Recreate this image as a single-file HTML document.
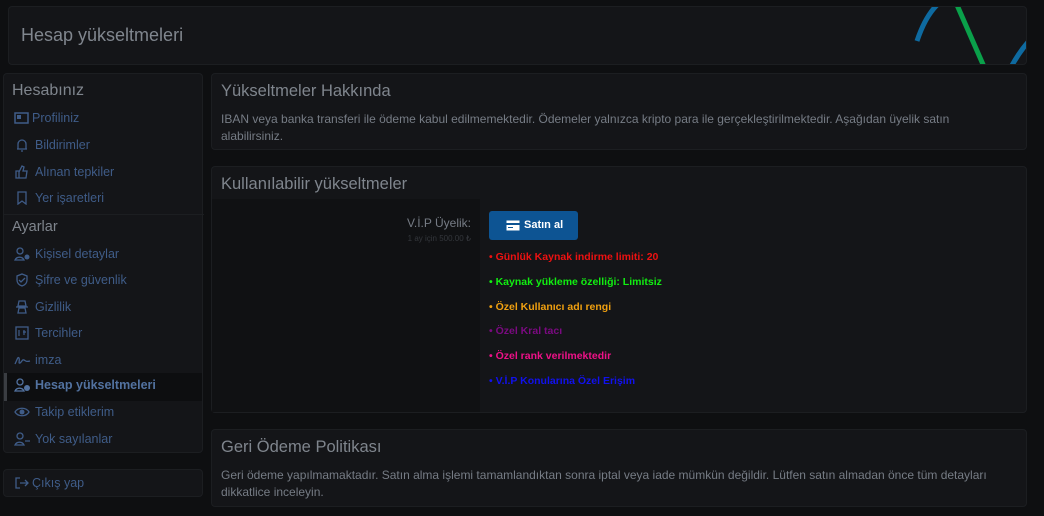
<!DOCTYPE html><html><head><meta charset="utf-8"><style>
*{box-sizing:border-box;margin:0;padding:0}
body{width:1044px;height:516px;background:#0e0f11;font-family:"Liberation Sans",sans-serif;overflow:hidden;position:relative;color:#8a8f98}
.b{position:absolute;background:#141518;border:1px solid #1c1e21;border-radius:4px}
.h{font-size:16.5px;color:#7f858d}
.nav{position:absolute;left:12px;font-size:12.5px;color:#3f5c88}
.nav svg{position:absolute;left:2px;top:0}
.nav span{position:absolute;left:23px;white-space:nowrap}
.li{position:absolute;left:489px;font-size:10.5px;font-weight:bold;white-space:nowrap}
</style></head><body>
<div class="b" style="left:8px;top:6px;width:1019px;height:59px;overflow:hidden">
<div style="position:absolute;left:12px;top:18px;font-size:18px;color:#80868e">Hesap yükseltmeleri</div>
<svg style="position:absolute;left:900px;top:0" width="120" height="60"><path d="M8 34 Q16 10 28 -2" stroke="#0e6aa0" stroke-width="5" fill="none"/><path d="M48 -2 Q62 30 76 62" stroke="#0aa04a" stroke-width="5" fill="none"/><path d="M101 62 Q110 45 120 34" stroke="#0e6aa0" stroke-width="5" fill="none"/></svg>
</div>
<div class="b" style="left:3px;top:73px;width:200px;height:380px">
<div style="position:absolute;left:8px;top:8px;font-size:16px;color:#7f858d">Hesabınız</div>
<div style="position:absolute;left:8px;top:145px;font-size:14.5px;color:#7f858d">Ayarlar</div>
<div style="position:absolute;left:0;top:140px;width:200px;border-top:1px solid #1c1e21"></div>
<div style="position:absolute;left:0;top:299px;width:198px;height:28px;background:#0d0e10;border-left:3px solid #3a3d42"></div>
</div>
<div class="nav" style="top:111px"><svg width="16" height="14"><rect x="1" y="2" width="13" height="10" fill="none" stroke="#3f5c88" stroke-width="1.5"/><rect x="3" y="4" width="4" height="4" fill="#3f5c88"/></svg><span style="left:20px">Profiliniz</span></div>
<div class="nav" style="top:138px"><svg width="16" height="14"><path d="M4 11V6a4 4 0 0 1 8 0v5H3h10M7 13h2" stroke="#3f5c88" fill="none" stroke-width="1.3"/></svg><span>Bildirimler</span></div>
<div class="nav" style="top:165px"><svg width="16" height="14"><path d="M2 6h3v7H2zM5 7l3-6 2 1-1 4h4l-1 7H5" stroke="#3f5c88" fill="none" stroke-width="1.3"/></svg><span>Alınan tepkiler</span></div>
<div class="nav" style="top:191px"><svg width="16" height="14"><path d="M4 1h8v12l-4-3-4 3z" stroke="#3f5c88" fill="none" stroke-width="1.3"/></svg><span>Yer işaretleri</span></div>
<div class="nav" style="top:247px"><svg width="18" height="14"><circle cx="6" cy="4" r="3" stroke="#3f5c88" fill="none" stroke-width="1.3"/><path d="M1 13a5 5 0 0 1 9 0z" stroke="#3f5c88" fill="none" stroke-width="1.3"/><circle cx="13" cy="10" r="2.5" fill="#3f5c88"/></svg><span>Kişisel detaylar</span></div>
<div class="nav" style="top:273px"><svg width="16" height="14"><path d="M8 1l5 2v4c0 3-2 5-5 6-3-1-5-3-5-6V3zM5 7l2 2 4-4" stroke="#3f5c88" fill="none" stroke-width="1.3"/></svg><span>Şifre ve güvenlik</span></div>
<div class="nav" style="top:300px"><svg width="16" height="14"><path d="M5 1h6l1 5H4zM2 7h12M4 13l1-5h6l1 5z" stroke="#3f5c88" fill="none" stroke-width="1.3"/></svg><span>Gizlilik</span></div>
<div class="nav" style="top:326px"><svg width="16" height="14"><rect x="2" y="1" width="12" height="12" stroke="#3f5c88" fill="none" stroke-width="1.3"/><path d="M5 4v6M9 6h3M10 4v5" stroke="#3f5c88" stroke-width="1.2"/></svg><span>Tercihler</span></div>
<div class="nav" style="top:353px"><svg width="18" height="14"><path d="M1 11c2-4 3-8 4-6s-1 6 1 5 2-4 4-3 2 2 6 1" stroke="#3f5c88" fill="none" stroke-width="1.3"/></svg><span>imza</span></div>
<div class="nav" style="top:378px;color:#5272a0;font-weight:bold"><svg width="18" height="14"><circle cx="6" cy="4" r="3" stroke="#5272a0" fill="none" stroke-width="1.3"/><path d="M1 13a5 5 0 0 1 9 0z" stroke="#5272a0" fill="none" stroke-width="1.3"/><circle cx="13" cy="10" r="3" fill="#5272a0"/></svg><span>Hesap yükseltmeleri</span></div>
<div class="nav" style="top:405px"><svg width="18" height="14"><path d="M1 7c3-5 11-5 14 0-3 5-11 5-14 0z" stroke="#3f5c88" fill="none" stroke-width="1.3"/><circle cx="8" cy="7" r="2.5" fill="#3f5c88"/></svg><span>Takip etiklerim</span></div>
<div class="nav" style="top:432px"><svg width="18" height="14"><circle cx="6" cy="4" r="3" stroke="#3f5c88" fill="none" stroke-width="1.3"/><path d="M1 13a5 5 0 0 1 9 0zM11 9h5" stroke="#3f5c88" fill="none" stroke-width="1.3"/></svg><span>Yok sayılanlar</span></div>
<div class="b" style="left:3px;top:469px;width:200px;height:28px"></div>
<div class="nav" style="top:476px"><svg width="16" height="14"><path d="M6 2H2v10h4M6 7h8M11 4l3 3-3 3" stroke="#3f5c88" fill="none" stroke-width="1.3"/></svg><span style="left:20px">Çıkış yap</span></div>

<div class="b" style="left:211px;top:73px;width:816px;height:77px">
<div class="h" style="position:absolute;left:9px;top:8px">Yükseltmeler Hakkında</div>
<div style="position:absolute;left:9px;top:37px;width:790px;font-size:12px;line-height:17px;color:#767c85">IBAN veya banka transferi ile ödeme kabul edilmemektedir. Ödemeler yalnızca kripto para ile gerçekleştirilmektedir. Aşağıdan üyelik satın alabilirsiniz.</div>
</div>
<div class="b" style="left:211px;top:166px;width:816px;height:247px">
<div class="h" style="position:absolute;left:9px;top:8px">Kullanılabilir yükseltmeler</div>
<div style="position:absolute;left:0;top:32px;width:268px;height:213px;background:#101113"></div>
<div style="position:absolute;right:555px;top:49px;font-size:12px;color:#767c85">V.İ.P Üyelik:</div>
<div style="position:absolute;right:555px;top:67px;font-size:8px;color:#34373c">1 ay için 500.00 ₺</div>
</div>
<div style="position:absolute;left:489px;top:211px;width:89px;height:29px;background:#0d5493;border-radius:3px;color:#fff;font-size:11px;font-weight:bold">
<svg style="position:absolute;left:17px;top:9px" width="14" height="11"><rect x="0.5" y="0.5" width="13" height="10" fill="#fff"/><rect x="0.5" y="3" width="13" height="2" fill="#0d5493"/><rect x="2" y="7" width="5" height="1" fill="#0d5493"/></svg>
<span style="position:absolute;left:35px;top:8px">Satın al</span></div>
<div class="li" style="top:251px;color:#ee1111">• Günlük Kaynak indirme limiti: 20</div>
<div class="li" style="top:276px;color:#11ee11">• Kaynak yükleme özelliği: Limitsiz</div>
<div class="li" style="top:301px;color:#f0a010">• Özel Kullanıcı adı rengi</div>
<div class="li" style="top:325px;color:#7a0a80">• Özel Kral tacı</div>
<div class="li" style="top:350px;color:#ee1188">• Özel rank verilmektedir</div>
<div class="li" style="top:375px;color:#1111ee">• V.İ.P Konularına Özel Erişim</div>
<div class="b" style="left:211px;top:429px;width:816px;height:78px">
<div class="h" style="position:absolute;left:9px;top:8px">Geri Ödeme Politikası</div>
<div style="position:absolute;left:9px;top:37px;width:800px;font-size:12px;line-height:17px;color:#767c85">Geri ödeme yapılmamaktadır. Satın alma işlemi tamamlandıktan sonra iptal veya iade mümkün değildir. Lütfen satın almadan önce tüm detayları dikkatlice inceleyin.</div>
</div>
</body></html>
